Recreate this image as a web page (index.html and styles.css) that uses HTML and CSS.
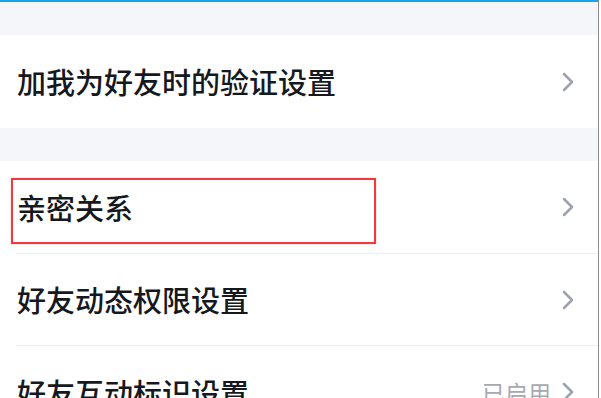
FILE: index.html
```html
<html>
    <head>
        <title>隐私设置</title>
        <link rel="stylesheet" href="styles.css">
    </head>
    <body>
        <div class="page">
            <div class="topline"></div>
            <div class="gap"></div>

            <div class="group">
                <div class="row row-first">
                    <span class="label">加我为好友时的验证设置</span>
                    <svg class="chevron" width="12" height="20" viewBox="0 0 12 20"><polyline points="2,2 10,10 2,18"/></svg>
                </div>
            </div>

            <div class="gap"></div>

            <div class="group">
                <div class="row marked">
                    <span class="label">亲密关系</span>
                    <svg class="chevron" width="12" height="20" viewBox="0 0 12 20"><polyline points="2,2 10,10 2,18"/></svg>
                    <div class="highlight"></div>
                </div>
                <div class="divider"></div>
                <div class="row row-short">
                    <span class="label">好友动态权限设置</span>
                    <svg class="chevron" width="12" height="20" viewBox="0 0 12 20"><polyline points="2,2 10,10 2,18"/></svg>
                </div>
                <div class="divider"></div>
                <div class="row">
                    <span class="label">好友互动标识设置</span>
                    <span class="value">已启用</span>
                    <svg class="chevron" width="12" height="20" viewBox="0 0 12 20"><polyline points="2,2 10,10 2,18"/></svg>
                </div>
            </div>
        </div>
    </body>
</html>
```

FILE: styles.css
```css
body {
    margin: 0;
    background-color: #ffffff;
    font-family: "Noto Sans CJK SC", "Noto Sans", sans-serif;
    overflow: hidden;
}

.page {
    width: 598px;
    height: 398px;
    border-right: 1px solid #8c8c8c;
    background-color: #f5f6fa;
    overflow: hidden;
}

.topline {
    height: 2px;
    background-color: #14a4f2;
}

.gap {
    height: 33px;
}

.group {
    background-color: #ffffff;
}

.row {
    position: relative;
    height: 92px;
    display: flex;
    align-items: center;
    padding-left: 17px;
    padding-right: 24px;
}

.row-first {
    height: 93px;
}

.row-short {
    height: 91px;
}

.label {
    flex: 1;
    font-size: 29px;
    font-weight: 500;
    color: #161820;
    line-height: 1;
}

.value {
    font-size: 23px;
    color: #a5a8b2;
    margin-right: 11px;
    line-height: 1;
}

.chevron polyline {
    fill: none;
    stroke: #9ea2ae;
    stroke-width: 2.5;
    stroke-linecap: round;
    stroke-linejoin: round;
}

.divider {
    height: 1px;
    margin-left: 16px;
    background-color: #eceef4;
}

/* red marker drawn over the row */
.highlight {
    position: absolute;
    left: 11px;
    top: 17px;
    width: 361px;
    height: 62px;
    border: 2.5px solid #f03a3e;
    box-shadow: 0 0 1px rgba(240, 58, 62, 0.6);
}
```
